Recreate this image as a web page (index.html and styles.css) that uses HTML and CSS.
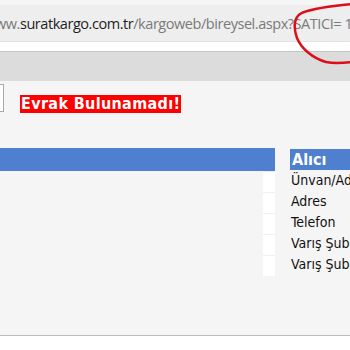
FILE: index.html
```html
<!DOCTYPE html>
<html lang="tr">
<head>
  <meta charset="UTF-8" />
  <title>Sürat Kargo - Bireysel</title>
  <link rel="stylesheet" href="styles.css">
</head>
<body>
  <div class="chrome">
    <div class="tabstrip"></div>
    <div class="address">
      <span class="dim">ww.</span><span class="host">suratkargo.com.tr</span><span class="dim">/kargoweb/bireysel.aspx?SATICI= 1</span>
    </div>
    <div class="gap"></div>
    <div class="toolbar"></div>
  </div>

  <div class="page">
    <div class="notice">
      <div class="check"></div>
      <span class="error">Evrak Bulunamadı!</span>
    </div>

    <div class="table">
      <div class="left">
        <div class="head"></div>
        <div class="cell"></div>
        <div class="cell"></div>
        <div class="cell"></div>
        <div class="cell"></div>
        <div class="cell"></div>
      </div>
      <div class="right">
        <div class="head">Alıcı</div>
        <div class="row">Ünvan/Adı Soyadı</div>
        <div class="row">Adres</div>
        <div class="row">Telefon</div>
        <div class="row">Varış Şube</div>
        <div class="row">Varış Şube Tel</div>
      </div>
    </div>
  </div>

  <!-- red marker circle drawn over the url -->
  <svg class="marker" width="70" height="70" viewBox="0 0 70 70">
    <path d="M72 4 C55 6 30 8 20 14 C13 19 14 30 17 38 C21 48 32 58 46 62 C55 64 64 63 72 62" fill="none" stroke="#dc0f18" stroke-width="2.5" stroke-linecap="round" />
  </svg>
</body>
</html>
```

FILE: styles.css
```css
* {
  box-sizing: border-box;
}

body {
  margin: 0;
  background: #fff;
  overflow: hidden;
  position: relative;
  height: 350px;
}

.chrome {
  font-family: "Open Sans", sans-serif;
}

.tabstrip {
  height: 5px;
  background: #f6f6f6;
}

.address {
  height: 37px;
  background: #eeeeee;
  border-bottom: 1px solid #e2e2e2;
  padding-top: 9px;
  font-size: 14.5px;
  white-space: nowrap;
  overflow: hidden;
  margin-left: -5px;
  letter-spacing: -0.45px;
}

.dim {
  color: #7a7a7a;
}

.host {
  color: #1e1e1e;
}

.gap {
  height: 10px;
  background: #fff;
  border-bottom: 1px solid #c6c6c6;
}

.toolbar {
  height: 29px;
  background: #dcdcdc;
}

.page {
  height: 255px;
  background: #f5f5f5;
  border-bottom: 1px solid #bdbdbd;
  font-family: "DejaVu Sans Condensed", "DejaVu Sans", sans-serif;
  padding-top: 3px;
}

.notice {
  display: flex;
  align-items: flex-end;
}

.check {
  width: 4px;
  height: 28px;
  background: #fff;
  border: 1px solid #a9a9a9;
  border-left: none;
}

.error {
  margin-left: 16px;
  margin-bottom: -1px;
  background: #ff0000;
  color: #fff;
  font-weight: bold;
  font-size: 16px;
  line-height: 18px;
  letter-spacing: 0.35px;
  padding: 0 1px;
}

.table {
  display: flex;
  gap: 15px;
  margin-top: 36px;
}

.left {
  width: 275px;
  display: flex;
  flex-direction: column;
  align-items: flex-end;
}

.left .head {
  width: 100%;
  height: 23px;
  background: #4f7fcf;
}

.cell {
  width: 12px;
  height: 21px;
  background: #fff;
  border-top: 1px solid #efefef;
}

.right {
  flex: 1;
  white-space: nowrap;
  overflow: hidden;
  font-size: 14px;
  color: #111;
}

.right .head {
  height: 21px;
  margin-top: 1px;
  background: #4f7fcf;
  color: #fff;
  font-weight: bold;
  font-size: 16px;
  line-height: 21px;
  padding-left: 2px;
}

.row {
  height: 21px;
  line-height: 21px;
  padding-left: 1px;
}

.marker {
  position: absolute;
  top: 0;
  left: 280px;
}
```
